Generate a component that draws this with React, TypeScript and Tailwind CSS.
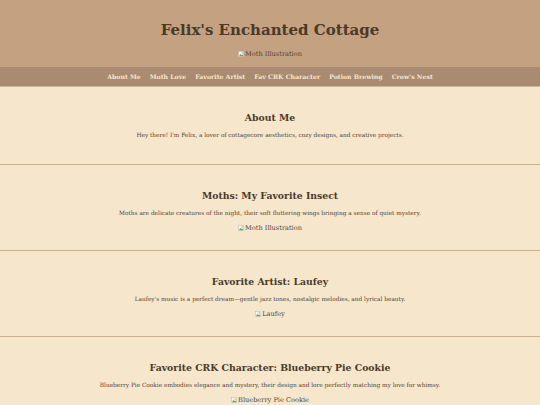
import React from 'react';

interface Section {
  id: string;
  title: string;
  text: string;
  image?: string;
}

const navLinks = ['About Me', 'Moth Love', 'Favorite Artist', 'Fav CRK Character', 'Potion Brewing', "Crow's Nest"];

const sections: Section[] = [
  {
    id: 'about',
    title: 'About Me',
    text: "Hey there! I'm Felix, a lover of cottagecore aesthetics, cozy designs, and creative projects.",
  },
  {
    id: 'moths',
    title: 'Moths: My Favorite Insect',
    text: 'Moths are delicate creatures of the night, their soft fluttering wings bringing a sense of quiet mystery.',
    image: 'Moth Illustration',
  },
  {
    id: 'artist',
    title: 'Favorite Artist: Laufey',
    text: "Laufey's music is a perfect dream\u2014gentle jazz tones, nostalgic melodies, and lyrical beauty.",
    image: 'Laufey',
  },
  {
    id: 'crk',
    title: 'Favorite CRK Character: Blueberry Pie Cookie',
    text: 'Blueberry Pie Cookie embodies elegance and mystery, their design and lore perfectly matching my love for whimsy.',
    image: 'Blueberry Pie Cookie',
  },
];

// stand-in for a broken <img>: little picture glyph + alt text
const BrokenImage: React.FC<{ alt: string }> = ({ alt }) => (
  <div className="flex items-center h-[10px] text-[6.6px] leading-[10px] text-[#554535]">
    <svg width="6" height="6" viewBox="0 0 7 7" className="mr-[1px]" aria-hidden="true">
      <rect x="0.5" y="0.5" width="6" height="6" fill="#f4f4f4" stroke="#b9b9b9" strokeWidth="0.6" />
      <path d="M1 6 L3 3.5 L4.5 5 L5.5 4 L6.5 6 Z" fill="#6aa84f" />
      <circle cx="5" cy="2.2" r="0.8" fill="#7fb3e0" />
    </svg>
    <span>{alt}</span>
  </div>
);

export default function App() {
  return (
    <div className="min-h-screen bg-[#f5e6cc] font-['DejaVu_Serif',Georgia,serif] text-[#4a3a2a] leading-none">
      {/* Header */}
      <header className="bg-[#c4a180] pt-[20px] pb-[8px] flex flex-col items-center">
        <h1 className="text-[15px] leading-[20px] font-bold text-[#4a3a28]">Felix's Enchanted Cottage</h1>
        <div className="mt-[9px]">
          <BrokenImage alt="Moth Illustration" />
        </div>
      </header>

      {/* Nav */}
      <nav className="bg-[#a98b71] h-[20px] flex items-center justify-center gap-[9px] border-b border-[#cdb59b]">
        {navLinks.map((link) => (
          <a key={link} href="#" className="text-[6.2px] leading-[10px] font-bold text-[#f5e6cc]">
            {link}
          </a>
        ))}
      </nav>

      {/* Sections */}
      <main>
        {sections.map((s) => (
          <section
            key={s.id}
            className={
              'flex flex-col items-center pt-[24px] border-b border-[#c9b092] ' +
              (s.image ? 'pb-[17px]' : 'pb-[24px]')
            }
          >
            <h2 className="text-[9.3px] leading-[14px] font-bold text-[#4a3a28]">{s.title}</h2>
            <p className="mt-[5px] text-[5.8px] leading-[10px] text-[#554535]">{s.text}</p>
            {s.image && (
              <div className="mt-[5px]">
                <BrokenImage alt={s.image} />
              </div>
            )}
          </section>
        ))}
      </main>
    </div>
  );
}
